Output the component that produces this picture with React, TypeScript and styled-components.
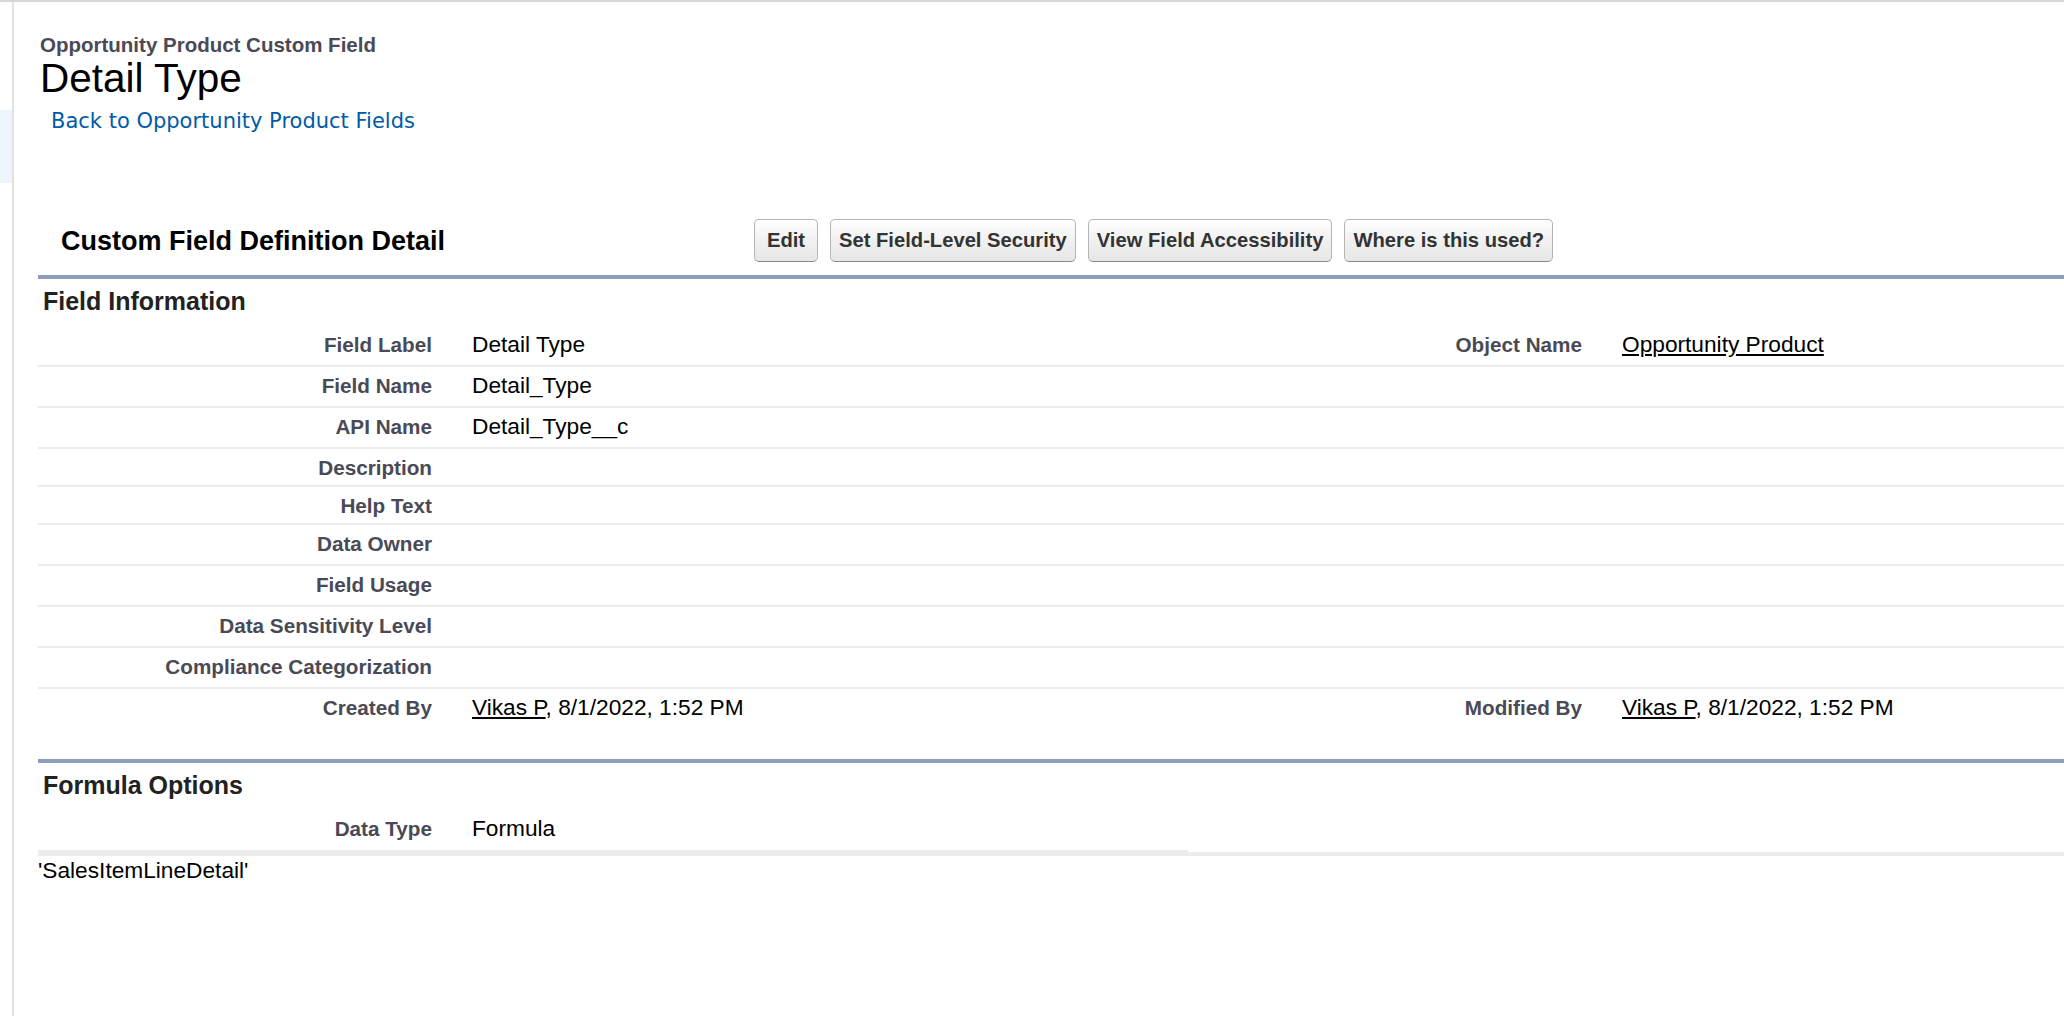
import * as React from 'react'
import styled, { createGlobalStyle } from 'styled-components'

const GlobalStyle = createGlobalStyle`
  html, body {
    margin: 0;
    padding: 0;
    background: #fff;
    overflow: hidden;
  }
  body {
    font-family: 'Liberation Sans', Arial, sans-serif;
    color: #000;
  }
`

const Page = styled.div`
  display: flex;
  width: 2064px;
  height: 1016px;
  box-sizing: border-box;
  border-top: 2px solid #d6d6d6;
  overflow: hidden;
`

const Sidebar = styled.aside`
  flex: 0 0 12px;
  border-right: 2px solid #e2e2e2;
  padding-top: 108px;
`

const SidebarHighlight = styled.div`
  height: 73px;
  background: #eef4fb;
`

const Content = styled.main`
  flex: 1;
  min-width: 0;
  padding: 32px 0 0 24px;
`

const PageHeader = styled.header`
  padding-left: 2px;
`

const ObjectType = styled.div`
  font-size: 20.5px;
  line-height: 22px;
  font-weight: bold;
  color: #4a4a56;
`

const PageTitle = styled.h1`
  margin: 0;
  font-size: 40.5px;
  line-height: 44px;
  font-weight: normal;
  color: #000;
`

const BackLink = styled.a`
  display: block;
  margin: 9px 0 0 11px;
  font-family: 'DejaVu Sans', Verdana, sans-serif;
  font-size: 21px;
  line-height: 24px;
  color: #015ba7;
  text-decoration: none;
`

const Block = styled.section`
  width: 2300px;
  margin-top: 80px;
`

const BlockHeader = styled.div`
  display: flex;
  align-items: center;
  height: 62px;
  box-sizing: border-box;
  padding: 6px 0 13px;
`

const BlockTitle = styled.h2`
  flex: 0 0 716px;
  box-sizing: border-box;
  margin: 0;
  padding-left: 23px;
  font-size: 27px;
  line-height: 30px;
  font-weight: bold;
  color: #000;
`

const ButtonBar = styled.div`
  display: flex;
  gap: 12px;
`

const Button = styled.button`
  min-width: 64px;
  height: 43px;
  padding: 0 8px;
  border: 1px solid #b5b5b5;
  border-bottom-color: #8a8a8a;
  border-radius: 5px;
  background: linear-gradient(#ffffff, #f2f2f2 45%, #e6e6e6);
  font-family: 'Liberation Sans', Arial, sans-serif;
  font-size: 20.2px;
  font-weight: bold;
  color: #333;
  cursor: pointer;
`

const Section = styled.div<{ $gap?: number }>`
  margin-top: ${(p) => p.$gap ?? 0}px;
`

const SubHeader = styled.h3`
  margin: 0;
  border-top: 4px solid #8e9db9;
  padding: 8px 0 11px 5px;
  font-size: 25px;
  line-height: 28px;
  font-weight: bold;
  color: #222;
`

const Row = styled.div<{ $height: number; $last?: boolean }>`
  display: grid;
  grid-template-columns: 414px 736px 414px 736px;
  height: ${(p) => p.$height}px;
  box-sizing: border-box;
  border-bottom: ${(p) => (p.$last ? 'none' : '2px solid #ececec')};
`

const Label = styled.div`
  box-sizing: border-box;
  padding: 7px 20px 0 0;
  text-align: right;
  font-size: 20.7px;
  line-height: 24px;
  font-weight: bold;
  color: #4a4a56;
  white-space: nowrap;
`

const Value = styled.div`
  box-sizing: border-box;
  padding: 5px 0 0 20px;
  font-size: 22.7px;
  line-height: 26px;
  color: #000;
  white-space: nowrap;
`

const UserLink = styled.a`
  color: #000;
  text-decoration: underline;
`

const FormulaRow = styled.div`
  border-bottom: 4px solid #ececec;
`

const FormulaCells = styled.div`
  display: grid;
  grid-template-columns: 414px 736px;
  width: 1150px;
  height: 42px;
  box-sizing: border-box;
  border-bottom: 2px solid #ebebeb;
`

const FormulaText = styled.div`
  margin-top: 1px;
  font-size: 22.7px;
  line-height: 26px;
  color: #000;
`

type Field = {
  label: string
  value?: React.ReactNode
  rightLabel?: string
  rightValue?: React.ReactNode
  height: number
  last?: boolean
}

const stamp = (
  <>
    <UserLink href="#">Vikas P</UserLink>, 8/1/2022, 1:52 PM
  </>
)

const fields: Field[] = [
  {
    label: 'Field Label',
    value: 'Detail Type',
    rightLabel: 'Object Name',
    rightValue: <UserLink href="#">Opportunity Product</UserLink>,
    height: 41,
  },
  { label: 'Field Name', value: 'Detail_Type', height: 41 },
  { label: 'API Name', value: 'Detail_Type__c', height: 41 },
  { label: 'Description', height: 38 },
  { label: 'Help Text', height: 38 },
  { label: 'Data Owner', height: 41 },
  { label: 'Field Usage', height: 41 },
  { label: 'Data Sensitivity Level', height: 41 },
  { label: 'Compliance Categorization', height: 41 },
  {
    label: 'Created By',
    value: stamp,
    rightLabel: 'Modified By',
    rightValue: stamp,
    height: 41,
    last: true,
  },
]

const buttons = ['Edit', 'Set Field-Level Security', 'View Field Accessibility', 'Where is this used?']

export default function App() {
  return (
    <>
      <GlobalStyle />
      <Page>
        <Sidebar>
          <SidebarHighlight />
        </Sidebar>
        <Content>
          <PageHeader>
            <ObjectType>Opportunity Product Custom Field</ObjectType>
            <PageTitle>Detail Type</PageTitle>
            <BackLink href="#">Back to Opportunity Product Fields</BackLink>
          </PageHeader>

          <Block>
            <BlockHeader>
              <BlockTitle>Custom Field Definition Detail</BlockTitle>
              <ButtonBar>
                {buttons.map((b) => (
                  <Button key={b}>{b}</Button>
                ))}
              </ButtonBar>
            </BlockHeader>

            <Section>
              <SubHeader>Field Information</SubHeader>
              {fields.map((f) => (
                <Row key={f.label} $height={f.height} $last={f.last}>
                  <Label>{f.label}</Label>
                  <Value>{f.value}</Value>
                  <Label>{f.rightLabel}</Label>
                  <Value>{f.rightValue}</Value>
                </Row>
              ))}
            </Section>

            <Section $gap={29}>
              <SubHeader>Formula Options</SubHeader>
              <FormulaRow>
                <FormulaCells>
                  <Label>Data Type</Label>
                  <Value>Formula</Value>
                </FormulaCells>
              </FormulaRow>
              <FormulaText>'SalesItemLineDetail'</FormulaText>
            </Section>
          </Block>
        </Content>
      </Page>
    </>
  )
}
